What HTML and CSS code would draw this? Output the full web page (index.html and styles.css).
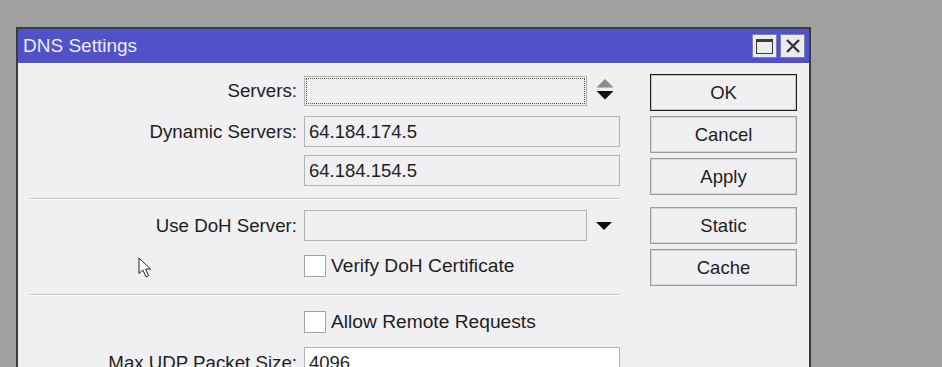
FILE: index.html
```html
<!DOCTYPE html>
<html lang="en">
<head>
<meta charset="utf-8">
<title>DNS Settings</title>
<link rel="stylesheet" href="styles.css">
</head>
<body>
<div class="win">
 <div class="titlebar">
  <span class="title">DNS Settings</span>
  <div class="tbtns">
   <span class="tb"><span class="maxicon"></span></span>
   <span class="tb">
    <svg width="16" height="16" viewBox="0 0 16 16"><path d="M2 2 L14 14 M14 2 L2 14" stroke="#333" stroke-width="2.4"/></svg>
   </span>
  </div>
 </div>

 <div class="body">
  <div class="form">
   <div class="row r1">
    <label>Servers:</label>
    <div class="cell">
     <div class="field short focus"></div>
     <svg class="spin" width="20" height="24" viewBox="0 0 20 24"><path d="M10 1 L18.5 9.5 L1.5 9.5 Z" fill="#8c8c8c"/><path d="M1.5 13 L18.5 13 L10 21.5 Z" fill="#111"/></svg>
    </div>
   </div>
   <div class="row r2">
    <label>Dynamic Servers:</label>
    <div class="field">64.184.174.5</div>
   </div>
   <div class="row r3">
    <label></label>
    <div class="field">64.184.154.5</div>
   </div>
   <div class="sep s1"></div>
   <div class="row r4">
    <label>Use DoH Server:</label>
    <div class="cell">
     <div class="field short"></div>
     <svg class="drop" width="20" height="10" viewBox="0 0 20 10"><path d="M2 1 L18 1 L10 9 Z" fill="#111"/></svg>
    </div>
   </div>
   <div class="row r5">
    <label></label>
    <div class="check"><span class="box"></span>Verify DoH Certificate</div>
   </div>
   <div class="sep s2"></div>
   <div class="row r6">
    <label></label>
    <div class="check"><span class="box"></span>Allow Remote Requests</div>
   </div>
   <div class="row r7">
    <label>Max UDP Packet Size:</label>
    <div class="field white">4096</div>
   </div>
  </div>

  <div class="buttons">
   <div class="btn def">OK</div>
   <div class="btn">Cancel</div>
   <div class="btn">Apply</div>
   <div class="btn grp">Static</div>
   <div class="btn">Cache</div>
  </div>
 </div>

 <svg class="cursor" width="16" height="22" viewBox="0 0 16 22"><path d="M1 1 L1 16.5 L4.8 13 L8 19.8 L10.6 18.7 L7.6 12 L12.6 12 Z" fill="#fff" stroke="#222" stroke-width="1" stroke-linejoin="round"/></svg>
</div>
</body>
</html>
```

FILE: styles.css
```css
body {
  margin: 0;
  background: #a0a0a0;
  font-family: "Liberation Sans", Arial, sans-serif;
  color: #1e1e1e;
  overflow: hidden;
}
.win {
  position: relative;
  margin: 27px 0 0 16px;
  width: 791px;
  height: 360px;
  border: 2px solid #3c3c3c;
  border-bottom: none;
  background: #f0eff2;
}
.titlebar {
  height: 34px;
  background: #5151c9;
  display: flex;
  align-items: center;
  justify-content: space-between;
}
.title {
  color: #ececf8;
  font-size: 19px;
  padding-left: 5px;
  padding-bottom: 1px;
}
.tbtns {
  display: flex;
  gap: 3px;
  padding-right: 4px;
}
.tb {
  width: 23px;
  height: 22px;
  background: #ebeaef;
  border: 1px solid #7d7dbd;
  display: flex;
  align-items: center;
  justify-content: center;
}
.maxicon {
  width: 15px;
  height: 11px;
  border: 1.5px solid #3a3a3a;
  border-top-width: 3px;
}

.body {
  display: flex;
  padding-top: 11px;
}
.form {
  width: 602px;
  margin-top: 1px;
}
.row {
  display: grid;
  grid-template-columns: 279px 316px;
  column-gap: 7px;
  height: 31px;
  align-items: center;
  font-size: 18.7px;
}
.row label {
  text-align: right;
}
.cell {
  display: flex;
  align-items: center;
}
.field {
  box-sizing: border-box;
  height: 31px;
  border: 1px solid #b3b3b3;
  padding: 0 4px;
  line-height: 29px;
  font-size: 18.5px;
  white-space: nowrap;
}
.field.short {
  width: 283px;
}
.field.focus {
  height: 30px;
  outline: 1px dotted #555;
  outline-offset: -3px;
}
.field.white {
  background: #fff;
}
.spin {
  margin-left: 8px;
  margin-top: -2px;
}
.drop {
  margin-left: 7px;
}
.check {
  display: flex;
  align-items: center;
  gap: 5px;
  font-size: 19.2px;
}
.box {
  box-sizing: border-box;
  width: 22px;
  height: 22px;
  background: #fff;
  border: 1px solid #a4a4a4;
}
.sep {
  margin-left: 12px;
  height: 1px;
  background: #c6c6c6;
  border-bottom: 1px solid #fbfbfb;
}
.r2 { margin-top: 10px; }
.r3 { margin-top: 8px; }
.s1 { margin-top: 12px; }
.r4 { margin-top: 10px; }
.r5 { margin-top: 9px; }
.s2 { margin-top: 13px; }
.r6 { margin-top: 10px; }
.r7 { margin-top: 10px; }

.buttons {
  margin-left: 30px;
  display: flex;
  flex-direction: column;
  gap: 5px;
}
.btn {
  box-sizing: border-box;
  width: 147px;
  height: 37px;
  border: 1px solid #9c9c9c;
  box-shadow: inset 0 0 0 1px #d6d6d8;
  text-align: center;
  line-height: 35px;
  font-size: 18.5px;
}
.btn.def {
  border-color: #1c1c1c;
  box-shadow: inset 0 0 0 1px #c4c4c4;
}
.btn.grp {
  margin-top: 7px;
}

.cursor {
  position: absolute;
  left: 120px;
  top: 228px;
}
```
